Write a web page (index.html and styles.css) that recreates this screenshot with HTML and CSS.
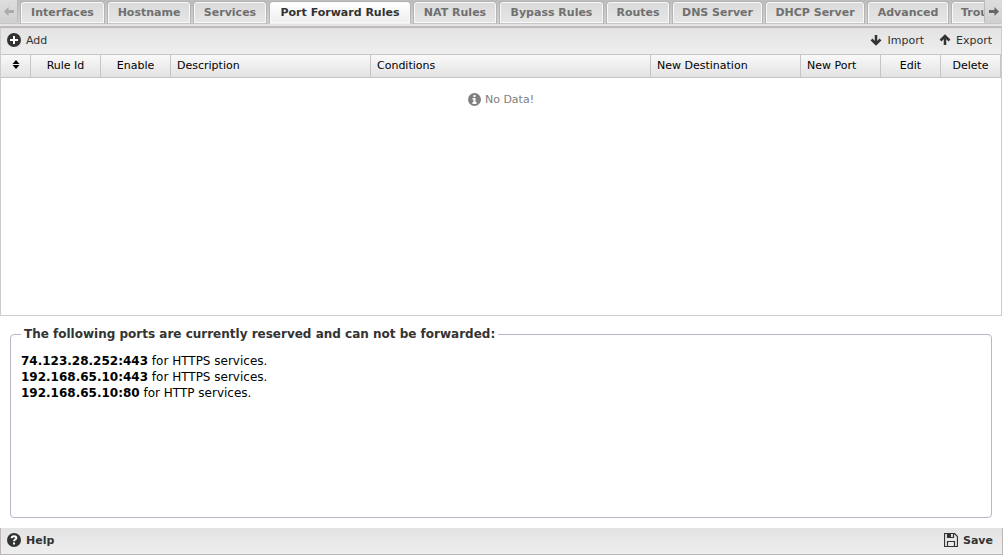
FILE: index.html
```html
<!DOCTYPE html>
<html lang="en">
<head>
<meta charset="utf-8">
<title>Port Forward Rules</title>
<link rel="stylesheet" href="styles.css">
</head>
<body>
<nav class="tabbar">
  <button class="scroller scroller-left" aria-label="Scroll left" disabled><svg width="10" height="9" viewBox="0 0 10 9"><path d="M0 4.500 4.500 0v3H10v3H4.500v3z"/></svg></button>
  <div class="tabs" role="tablist">
    <button class="tab" role="tab">Interfaces</button>
    <button class="tab" role="tab">Hostname</button>
    <button class="tab" role="tab">Services</button>
    <button class="tab active" role="tab" aria-selected="true">Port Forward Rules</button>
    <button class="tab" role="tab">NAT Rules</button>
    <button class="tab" role="tab">Bypass Rules</button>
    <button class="tab" role="tab">Routes</button>
    <button class="tab" role="tab">DNS Server</button>
    <button class="tab" role="tab">DHCP Server</button>
    <button class="tab" role="tab">Advanced</button>
    <button class="tab" role="tab">Troubleshooting</button>
  </div>
  <button class="scroller scroller-right" aria-label="Scroll right"><svg width="10" height="9" viewBox="0 0 10 9"><path d="M10 4.500 5.500 0v3H0v3h5.500v3z"/></svg></button>
</nav>
<main class="main">
  <section class="grid">
    <div class="toolbar">
      <button class="tool"><svg width="14" height="14" viewBox="0 0 14 14"><circle cx="7" cy="7" r="7"/><path class="cut" d="M6 3h2v3h3v2H8v3H6V8H3V6h3z"/></svg>Add</button>
      <span class="spacer"></span>
      <button class="tool"><svg width="12" height="12" viewBox="0 0 12 12"><path class="arrow" d="M6 1v9M1.500 5.500 6 10l4.500-4.500"/></svg>Import</button>
      <button class="tool"><svg width="12" height="12" viewBox="0 0 12 12"><path class="arrow" d="M6 11V2M1.500 6.500 6 2l4.500 4.500"/></svg>Export</button>
    </div>
    <table class="rules">
      <colgroup><col class="w-sort"><col class="w-id"><col class="w-id"><col class="w-desc"><col><col class="w-dest"><col class="w-port"><col class="w-act"><col class="w-act"></colgroup>
      <thead>
        <tr>
          <th class="center" aria-label="Reorder"><svg width="8" height="9" viewBox="0 0 8 9"><path d="M.5 4 4 0l3.500 4zM.5 5h7L4 9z"/></svg></th>
          <th class="center">Rule Id</th>
          <th class="center">Enable</th>
          <th>Description</th>
          <th>Conditions</th>
          <th>New Destination</th>
          <th>New Port</th>
          <th class="center">Edit</th>
          <th class="center">Delete</th>
        </tr>
      </thead>
    </table>
    <p class="empty"><svg width="13" height="13" viewBox="0 0 13 13"><circle cx="6.500" cy="6.500" r="6.500"/><path class="cut" d="M5.500 2h2v2h-2zM4.500 5h3v4h1v2h-4V9h1V6.500h-1z"/></svg>No Data!</p>
  </section>
  <section class="reserved">
    <fieldset class="ports">
      <legend>The following ports are currently reserved and can not be forwarded:</legend>
      <b>74.123.28.252:443</b> for HTTPS services.<br>
      <b>192.168.65.10:443</b> for HTTPS services.<br>
      <b>192.168.65.10:80</b> for HTTP services.
    </fieldset>
  </section>
</main>
<footer class="footer">
  <button class="tool strong"><svg width="14" height="14" viewBox="0 0 14 14"><circle cx="7" cy="7" r="7"/><path class="mark" d="M4.600 5.200C4.800 3.700 5.800 3.300 7 3.300c1.400 0 2.300.7 2.300 1.800C9.300 6.600 7 6.500 7 8.300"/><path class="cut" d="M6 9.500h2v2H6z"/></svg>Help</button>
  <button class="tool strong"><svg width="14" height="14" viewBox="0 0 14 14"><path class="disk" d="M.5.5h10l3 3v10H.5zM3.500.5v4h6v-4M3.500 13.500v-5h7v5"/><path d="M4 1h3v3H4z"/></svg>Save</button>
</footer>
</body>
</html>
```
FILE: styles.css
```css
* { box-sizing: border-box; }

body {
  margin: 0;
  height: 100vh;
  display: flex;
  flex-direction: column;
  background: #fff;
  font: 11px/13px "DejaVu Sans", sans-serif;
  color: #333;
}

button {
  margin: 0;
  border: 0;
  background: none;
  color: inherit;
  font: inherit;
  white-space: nowrap;
}

svg { flex: none; fill: currentColor; }
.cut { fill: #fff; }
.arrow { fill: none; stroke: currentColor; stroke-width: 2.500; }
.mark { fill: none; stroke: #fff; stroke-width: 2; }
.disk { fill: none; stroke: currentColor; stroke-width: 1.200; }

.tabbar {
  display: flex;
  flex: none;
  align-items: flex-start;
  height: 27px;
  margin-right: 2px;
  background: linear-gradient(#bcbcbc 0, #d2d2d2 23px, #c6c6c6 23px, #c6c6c6 24px, #e4e4e4 24px, #e4e4e4 26px, #c4bfc0 26px);
}

.tabs {
  display: grid;
  flex: 1;
  grid-template-columns: 85px 84px 74px 142px 84px 105px 64px 91px 100px 82px max-content;
  gap: 2px;
  min-width: 0;
  padding: 1px 0 0 2px;
  overflow: hidden;
}

.tab {
  height: 23px;
  padding: 0 9px;
  border: 1px solid #b4b4b4;
  border-bottom-color: #c6c6c6;
  border-radius: 4px 4px 0 0;
  background: linear-gradient(#dadada, #e6e6e6);
  box-shadow: inset 0 0 0 1px #f8f8f8;
  color: #707070;
  font-weight: bold;
}

.tab.active {
  border-bottom-color: #eee;
  background: linear-gradient(#fff, #eee);
  color: #333;
}

.scroller {
  display: grid;
  flex: none;
  place-items: center;
  width: 18px;
  height: 22px;
  padding: 0 0 0 1px;
  border-right: 1px solid #bbb;
  background: linear-gradient(#ddd, #d0d0d0);
  color: #666;
}

.scroller-left { color: #aaa; }
.scroller-right { border-right: 0; border-left: 1px solid #bbb; }

.main {
  display: flex;
  flex: 1;
  flex-direction: column;
  margin-right: 2px;
}

.grid {
  flex: 1;
  border: 1px solid #ccc;
  border-top-color: #beb5b6;
}

.toolbar, .footer {
  display: flex;
  align-items: center;
  background: linear-gradient(#e3e3e3, #eee);
}

.toolbar { height: 26px; padding: 0 3px 2px 0; }
.spacer { flex: 1; }

.tool {
  display: flex;
  align-items: center;
  gap: 5px;
  padding: 0 6px;
}

.toolbar .tool + .tool { padding-left: 9px; }
.strong { font-weight: bold; }

.rules {
  width: 100%;
  border-collapse: separate;
  border-spacing: 0;
  table-layout: fixed;
}

.w-sort { width: 30px; }
.w-id { width: 70px; }
.w-desc { width: 200px; }
.w-dest { width: 150px; }
.w-port { width: 80px; }
.w-act { width: 60px; }

.rules th {
  height: 24px;
  padding: 0 6px 2px;
  border: solid #c5c5c5;
  border-width: 1px 1px 1px 0;
  background: linear-gradient(#f9f9f9, #e4e2e3);
  color: #000;
  font-weight: normal;
  text-align: left;
  white-space: nowrap;
}

.rules .center { text-align: center; }

.empty {
  display: flex;
  align-items: center;
  justify-content: center;
  gap: 4px;
  margin: 15px 0 0;
  color: #808080;
}

.reserved { padding: 10px; }

.ports {
  min-height: 192px;
  margin: 0;
  padding: 11px 10px 10px;
  border: 1px solid #b5b8c8;
  border-radius: 4px;
  color: #000;
  font-size: 12px;
  line-height: 16px;
}

.ports legend {
  padding: 0 3px;
  color: #333;
  font-weight: bold;
}

.footer {
  flex: none;
  justify-content: space-between;
  height: 27px;
  margin-right: 1px;
  padding: 0 3px 2px 0;
  border: 1px solid #beb5b6;
  border-top: 0;
}
```
